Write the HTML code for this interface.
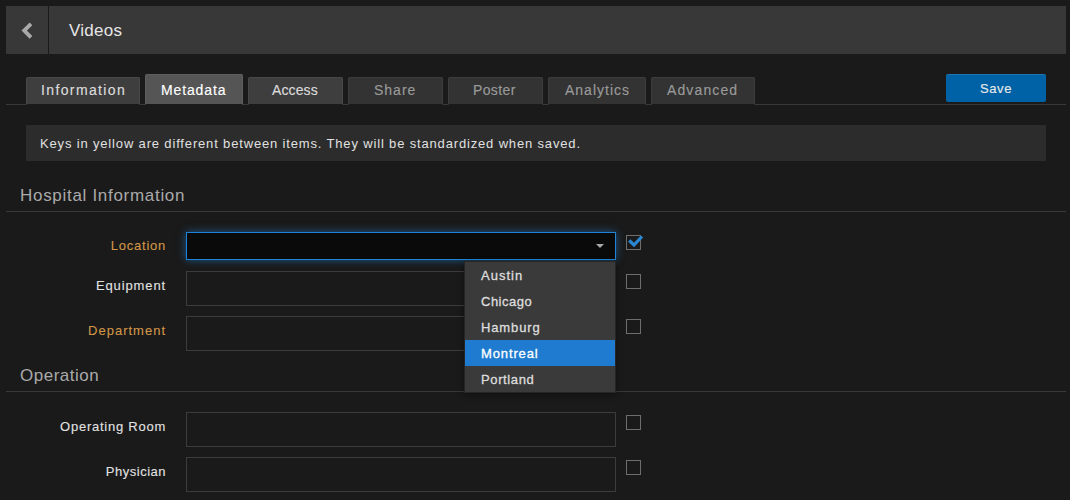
<!DOCTYPE html>
<html><head><meta charset="utf-8">
<style>
html,body{margin:0;padding:0;}
body{width:1070px;height:500px;background:#1a1a1a;position:relative;overflow:hidden;font-family:"Liberation Sans",sans-serif;}
.a{position:absolute;}
.t{position:absolute;white-space:nowrap;line-height:1;}
#hdr{left:6px;top:6px;width:1060px;height:48px;background:#383838;}
#sep{left:48px;top:6px;width:1px;height:48px;background:#1a1a1a;}
.tab{position:absolute;box-sizing:border-box;top:77px;height:28px;background:#3e3e3e;border:1px solid #484848;border-bottom:1px solid #1a1a1a;border-radius:2px 2px 0 0;}
.tab.dis{background:#333333;border-color:#3d3d3d #3d3d3d #1a1a1a;}
.tab.act{top:74px;height:31px;background:#555555;border-color:#5f5f5f #5f5f5f #1a1a1a;}
.tt{position:absolute;white-space:nowrap;line-height:1;font-size:14px;color:#dcdcdc;-webkit-text-stroke:0.15px #dcdcdc;top:83px;}
.tt.dis{color:#9a9a9a;-webkit-text-stroke:0.15px #9a9a9a;}
.tt.act{color:#ffffff;-webkit-text-stroke:0.15px #ffffff;}
.line{position:absolute;left:6px;width:1060px;height:1px;background:#383838;}
.sec{position:absolute;white-space:nowrap;line-height:1;font-size:17px;color:#aaaaaa;letter-spacing:0.7px;}
.lbl{position:absolute;white-space:nowrap;line-height:1;font-size:13px;color:#e2e2e2;-webkit-text-stroke:0.1px #e2e2e2;text-align:right;}
.or{color:#d29648;-webkit-text-stroke:0.1px #d29648;}
.inp{position:absolute;left:186px;width:428px;height:33px;border:1px solid #3c3c3c;}
.cb{position:absolute;left:626px;width:13px;height:13px;border:1px solid #6e6e6e;}
.dd{position:absolute;white-space:nowrap;line-height:1;font-size:13px;color:#dedede;-webkit-text-stroke:0.3px #dedede;left:480px;letter-spacing:0.75px;}
</style></head>
<body>
<div id="hdr" class="a"></div>
<div id="sep" class="a"></div>
<svg class="a" style="left:0;top:0" width="60" height="60"><polyline points="31,23.8 24.2,30.6 31,37.4" fill="none" stroke="#aaaaaa" stroke-width="3.8"/></svg>
<div class="t" style="left:69px;top:22px;font-size:17px;color:#e6e6e6;letter-spacing:0.25px;">Videos</div>

<!-- tabs -->
<div class="line" style="top:104px"></div>
<div class="tab" style="left:26px;width:114px"></div>
<div class="tab act" style="left:145px;width:98px"></div>
<div class="tab" style="left:248px;width:95px"></div>
<div class="tab dis" style="left:348px;width:95px"></div>
<div class="tab dis" style="left:448px;width:95px"></div>
<div class="tab dis" style="left:548px;width:98px"></div>
<div class="tab dis" style="left:651px;width:104px"></div>
<div class="tt" style="left:41px;letter-spacing:1.375px">Information</div>
<div class="tt act" style="left:161px;letter-spacing:0.875px">Metadata</div>
<div class="tt" style="left:272px;letter-spacing:0.125px">Access</div>
<div class="tt dis" style="left:374px;letter-spacing:1px">Share</div>
<div class="tt dis" style="left:473px;letter-spacing:0.375px">Poster</div>
<div class="tt dis" style="left:565px;letter-spacing:1px">Analytics</div>
<div class="tt dis" style="left:667px;letter-spacing:1.125px">Advanced</div>

<div class="a" style="left:946px;top:74px;width:100px;height:28px;background:#0062a6;border-radius:2px;box-shadow:inset 0 1px 0 rgba(255,255,255,0.12);"></div>
<div class="t" style="left:980px;top:82px;font-size:13px;color:#e8e8e8;-webkit-text-stroke:0.15px #e8e8e8;letter-spacing:0.6px;">Save</div>

<!-- info bar -->
<div class="a" style="left:26px;top:125px;width:1020px;height:36px;background:#2c2c2c;"></div>
<div class="t" style="left:40px;top:137px;font-size:13px;color:#e0e0e0;letter-spacing:0.84px;">Keys in yellow are different between items. They will be standardized when saved.</div>

<!-- Hospital Information -->
<div class="sec" style="left:20px;top:187px">Hospital Information</div>
<div class="line" style="top:211px"></div>

<div class="lbl or" style="right:904px;top:239px;letter-spacing:0.75px">Location</div>
<div class="a" style="left:186px;top:232px;width:428px;height:26px;border:1px solid #1f84d8;background:#0a0a0a;box-shadow:0 0 8px rgba(30,136,229,0.55);"></div>
<svg class="a" style="left:590px;top:240px" width="20" height="12"><polygon points="6,4 14,4 10,8" fill="#a8a8a8"/></svg>
<div class="cb" style="top:235px"></div>
<svg class="a" style="left:620px;top:228px" width="30" height="26"><polyline points="9.2,12.5 14,17 22,8.5" fill="none" stroke="#2a87d4" stroke-width="3.2"/></svg>

<div class="lbl" style="right:904px;top:279px;letter-spacing:0.875px">Equipment</div>
<div class="inp" style="top:271px"></div>
<div class="cb" style="top:274px"></div>

<div class="lbl or" style="right:904px;top:324px;letter-spacing:1px">Department</div>
<div class="inp" style="top:316px"></div>
<div class="cb" style="top:319px"></div>

<!-- Operation -->
<div class="sec" style="left:20px;top:367px;letter-spacing:0.5px">Operation</div>
<div class="line" style="top:391px"></div>

<div class="lbl" style="right:904px;top:420px;letter-spacing:0.75px">Operating Room</div>
<div class="inp" style="top:412px"></div>
<div class="cb" style="top:415px"></div>

<div class="lbl" style="right:904px;top:465px;letter-spacing:0.5px">Physician</div>
<div class="inp" style="top:457px"></div>
<div class="cb" style="top:460px"></div>

<!-- dropdown -->
<div class="a" style="left:464px;top:261px;width:150px;height:130px;background:#3a3a3a;border:1px solid #262626;box-shadow:0 2px 6px rgba(0,0,0,0.4);"></div>
<div class="a" style="left:465px;top:340px;width:150px;height:26px;background:#1e7bcf;"></div>
<div class="dd" style="left:481px;top:269px;letter-spacing:1px">Austin</div>
<div class="dd" style="left:481px;top:295px;letter-spacing:0.5px">Chicago</div>
<div class="dd" style="left:481px;top:321px;letter-spacing:0.875px">Hamburg</div>
<div class="dd" style="left:481px;top:347px;color:#ffffff;-webkit-text-stroke:0.3px #fff;letter-spacing:0.875px">Montreal</div>
<div class="dd" style="left:481px;top:373px;letter-spacing:0.625px">Portland</div>
</body></html>
